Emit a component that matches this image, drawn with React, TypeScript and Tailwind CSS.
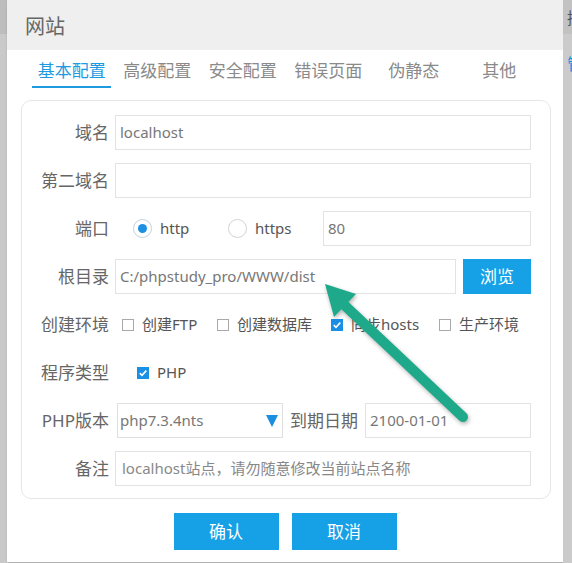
import React from 'react';

const Label = ({ children }: { children: React.ReactNode }) => (
  <div className="w-[87px] shrink-0 text-right text-[17px] leading-[35px] text-[#666]">{children}</div>
);

const Field = ({ value, className = '' }: { value?: string; className?: string }) => (
  <div
    className={`h-[35px] flex items-center border border-[#e3e3e3] px-[4px] text-[15px] text-[#777] whitespace-nowrap overflow-hidden ${className}`}
  >
    {value}
  </div>
);

const Radio = ({ checked, label }: { checked?: boolean; label: string }) => (
  <div className="w-[95px] flex items-center gap-[8px]">
    <span
      className={`w-[19px] h-[19px] rounded-full border flex items-center justify-center ${
        checked ? 'border-[#c3d2de]' : 'border-[#d3d3d3]'
      }`}
    >
      {checked && <span className="w-[9px] h-[9px] rounded-full bg-[#1e90e2]" />}
    </span>
    <span className="text-[15px] text-[#555]">{label}</span>
  </div>
);

const Check = ({ checked, label, className = '' }: { checked?: boolean; label: string; className?: string }) => (
  <div className={`flex items-center gap-[8px] ${className}`}>
    {checked ? (
      <span className="w-[12px] h-[12px] bg-[#1a8fe6] flex items-center justify-center">
        <svg width="10" height="10" viewBox="0 0 10 10">
          <path d="M1.8 5.2 L4 7.3 L8.3 2.6" fill="none" stroke="#fff" strokeWidth="1.6" />
        </svg>
      </span>
    ) : (
      <span className="w-[12px] h-[12px] border border-[#a9a9a9] bg-white" />
    )}
    <span className="text-[15px] text-[#555]">{label}</span>
  </div>
);

const tabs = ['基本配置', '高级配置', '安全配置', '错误页面', '伪静态', '其他'];

export default function App() {
  return (
    <div className="relative w-[572px] h-[563px] overflow-hidden flex bg-[#c8c8c8] font-['Noto_Sans','Noto_Sans_CJK_SC',sans-serif]">
      {/* page behind the dialog */}
      <div className="w-[7px] shrink-0 flex flex-col">
        <div className="h-[34px] bg-[#bdbdbd]" />
        <div className="flex-1 bg-[#c9c9c9]" />
      </div>

      <div className="w-[556px] h-[562px] shrink-0 bg-white flex flex-col shadow-[1px_0_3px_rgba(0,0,0,0.3)] rounded-t-[2px]">
        <div className="h-[50px] bg-[#efefef] pl-[18px] pt-[2px] text-[20px] leading-[50px] text-[#666]">网站</div>

        <div className="flex pl-[22px]">
          {tabs.map((t, i) => (
            <div key={t} className="w-[85.5px] flex justify-center">
              <span
                className={`pt-[9px] pb-[3px] px-[5.5px] text-[17px] leading-[24px] border-b-2 ${
                  i === 0 ? 'text-[#1e9be0] border-[#1e9be0]' : 'text-[#8a8a8a] border-transparent'
                }`}
              >
                {t}
              </span>
            </div>
          ))}
        </div>

        <div className="ml-[14px] mt-[12px] w-[530px] rounded-[10px] border border-[#e6e6e6] pt-[14px] pb-[12px] pr-[19px] flex flex-col gap-[13px]">
          <div className="flex items-center gap-[6px]">
            <Label>域名</Label>
            <Field value="localhost" className="flex-1" />
          </div>
          <div className="flex items-center gap-[6px]">
            <Label>第二域名</Label>
            <Field className="flex-1" />
          </div>
          <div className="flex items-center gap-[6px]">
            <Label>端口</Label>
            <div className="flex items-center ml-[18px]">
              <Radio checked label="http" />
              <Radio label="https" />
            </div>
            <Field value="80" className="flex-1 -ml-[6px]" />
          </div>
          <div className="flex items-center gap-[6px]">
            <Label>根目录</Label>
            <Field value="C:/phpstudy_pro/WWW/dist" className="flex-1" />
            <button className="w-[68px] h-[35px] ml-[1px] bg-[#16a1e7] text-white text-[17px]">浏览</button>
          </div>
          <div className="flex items-center gap-[6px] h-[35px]">
            <Label>创建环境</Label>
            <div className="flex items-center ml-[7px]">
              <Check label="创建FTP" className="w-[95px]" />
              <Check label="创建数据库" className="w-[114px]" />
              <Check checked label="同步hosts" className="w-[108px]" />
              <Check label="生产环境" />
            </div>
          </div>
          <div className="flex items-center gap-[6px] h-[35px]">
            <Label>程序类型</Label>
            <Check checked label="PHP" className="ml-[22px]" />
          </div>
          <div className="flex items-center gap-[6px]">
            <Label>PHP版本</Label>
            <div className="ml-[2px] w-[166px] h-[35px] border border-[#e0e0e0] flex items-center justify-between pl-[2px] pr-[4px] text-[15px] text-[#777]">
              <span>php7.3.4nts</span>
              <svg width="12" height="12" viewBox="0 0 12 12">
                <polygon points="0,0 12,0 6,12" fill="#1a8fe0" />
              </svg>
            </div>
            <div className="ml-[1px] text-[17px] text-[#666]">到期日期</div>
            <Field value="2100-01-01" className="flex-1 ml-[1px]" />
          </div>
          <div className="flex items-center gap-[6px]">
            <Label>备注</Label>
            <Field value="localhost站点，请勿随意修改当前站点名称" className="flex-1 pl-[6px] text-[#888]" />
          </div>
        </div>

        <div className="flex justify-center gap-[13px] mt-[14px]">
          <button className="w-[105px] h-[37px] bg-[#16a1e7] text-white text-[17px]">确认</button>
          <button className="w-[105px] h-[37px] bg-[#16a1e7] text-white text-[17px]">取消</button>
        </div>
      </div>

      <div className="w-[9px] shrink-0 flex flex-col overflow-hidden">
        <div className="h-[34px] bg-[#c2c2c2] pl-[4px] pt-[8px] text-[16px] leading-[20px] text-[#555] whitespace-nowrap">接</div>
        <div className="flex-1 bg-[#cbcbcb] pl-[4px] pt-[20px] text-[16px] leading-[20px] text-[#1e8fe0] whitespace-nowrap">管</div>
      </div>

      {/* annotation arrow */}
      <svg
        className="absolute left-0 top-0 pointer-events-none drop-shadow-[1px_2px_2px_rgba(0,0,0,0.3)]"
        width="572"
        height="563"
        viewBox="0 0 572 563"
      >
        <line x1="340" y1="301" x2="463" y2="417" stroke="#1fa98b" strokeWidth="10" strokeLinecap="round" />
        <polygon points="325,284 356,294 334,317" fill="#1fa98b" />
      </svg>
    </div>
  );
}
